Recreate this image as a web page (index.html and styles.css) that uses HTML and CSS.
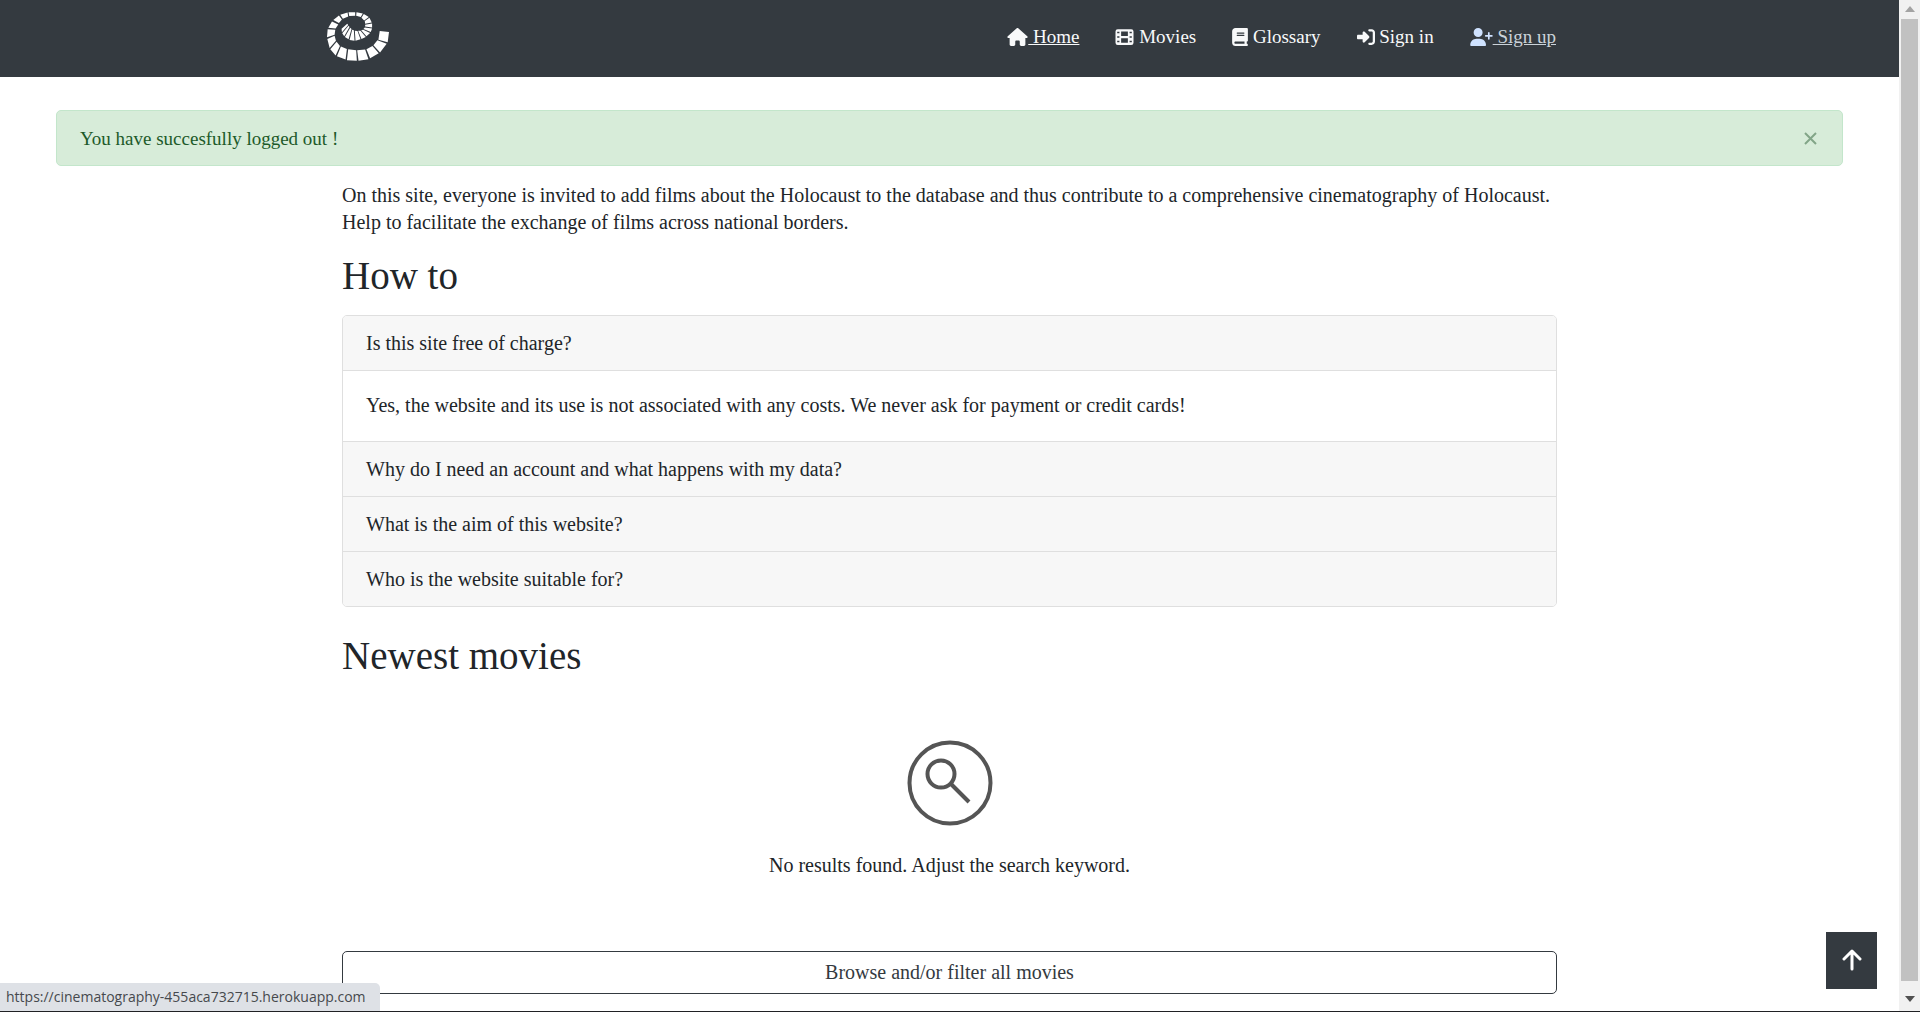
FILE: index.html
```html
<!DOCTYPE html>
<html lang="en">
<head>
<meta charset="utf-8">
<meta name="viewport" content="width=device-width, initial-scale=1">
<title>Cinematography of Holocaust</title>
<link rel="stylesheet" href="styles.css">
</head>
<body>
<div class="page">
  <header class="site-header">
    <div class="header-inner">
      <a class="logo" href="#" aria-label="Cinematography home">
        <svg viewBox="45 35 193 153" width="64" height="51" fill="#fff" aria-hidden="true">
          <path d="M207 95L235 98L231 129L203 121ZM200 123L228 133L208 160L188 138ZM185 140L204 162L178 177L167 150ZM163 151L173 180L143 185L139 153ZM136 153L138 185L108 183L112 150ZM108 149L104 181L78 171L90 142ZM87 140L74 169L58 150L77 127ZM75 124L56 146L49 119L71 109ZM71 106L48 114L50 90L73 91ZM74 87L52 85L63 66L82 75ZM84 71L67 62L84 48L93 60ZM96 58L88 46L110 39L112 51ZM115 50L113 38L133 38L133 49ZM136 49L137 38L156 42L150 53ZM152 55L159 44L174 53L160 63ZM162 65L176 55L183 69L163 73ZM163 76L184 72L184 84L163 81ZM162 84L184 87L180 98L158 89ZM157 91L178 101L167 111L151 93ZM149 94L165 113L152 119L142 94ZM140 95L149 120L134 124L132 94ZM129 93L131 124L116 122L124 91ZM122 89L113 120L102 113L118 85ZM116 83L100 111L94 102L113 79ZM112 77L93 99L92 88L109 73Z"/>
        </svg>
      </a>
      <nav class="nav" aria-label="Main">
        <a class="nav-link underlined" href="#">
          <svg class="icon" width="21" height="18" viewBox="0 0 576 512" aria-hidden="true"><path d="M575.8 255.5c0 18-15 32.1-32 32.1h-32l.7 160.2c0 2.7-.2 5.4-.5 8.1V472c0 22.1-17.9 40-40 40H456c-1.100 0-2.200 0-3.300-.1c-1.400 .1-2.800 .1-4.200 .1H416 392c-22.100 0-40-17.900-40-40V448 384c0-17.700-14.300-32-32-32H256c-17.700 0-32 14.300-32 32v64 24c0 22.100-17.900 40-40 40H160 128.100c-1.500 0-3-.1-4.500-.2c-1.200 .1-2.400 .2-3.600 .2H104c-22.100 0-40-17.900-40-40V360c0-.9 0-1.900 .1-2.800V287.600H32c-18 0-32-14-32-32.100c0-9 3-17 10-24L266.400 8c7-7 15-8 22-8s15 2 21 7L564.800 231.500c8 7 12 15 11 24z"/></svg><span class="nav-text">&nbsp;Home</span></a>
        <a class="nav-link" href="#">
          <svg class="icon" width="19" height="18" viewBox="0 0 512 512" aria-hidden="true"><path fill-rule="evenodd" d="M64 32H448a64 64 0 0 1 64 64V416a64 64 0 0 1-64 64H64a64 64 0 0 1-64-64V96a64 64 0 0 1 64-64ZM48 104v48h64v-48ZM48 232v48h64v-48ZM48 360v48h64v-48ZM400 104v48h64v-48ZM400 232v48h64v-48ZM400 360v48h64v-48ZM160 96v128h192V96ZM160 288v128h192V288Z"/></svg><span class="nav-text">&nbsp;Movies</span></a>
        <a class="nav-link" href="#">
          <svg class="icon" width="16" height="18" viewBox="0 0 448 512" aria-hidden="true"><path d="M96 0C43 0 0 43 0 96V416c0 53 43 96 96 96H384h32c17.700 0 32-14.300 32-32s-14.300-32-32-32V384c17.700 0 32-14.300 32-32V32c0-17.700-14.300-32-32-32H384 96zm0 384H352v64H96c-17.700 0-32-14.300-32-32s14.300-32 32-32zm32-240c0-8.800 7.200-16 16-16H336c8.800 0 16 7.200 16 16s-7.200 16-16 16H144c-8.800 0-16-7.200-16-16zm16 48H336c8.800 0 16 7.200 16 16s-7.200 16-16 16H144c-8.800 0-16-7.200-16-16s7.200-16 16-16z"/></svg><span class="nav-text">&nbsp;Glossary</span></a>
        <a class="nav-link" href="#">
          <svg class="icon" width="18" height="18" viewBox="0 0 512 512" aria-hidden="true"><path d="M217.900 105.900L340.700 228.700c7.200 7.200 11.300 17.100 11.300 27.300s-4.100 20.100-11.300 27.300L217.900 406.100c-6.400 6.400-15 9.900-24 9.900c-18.700 0-33.900-15.200-33.900-33.900V320H32c-17.700 0-32-14.300-32-32V224c0-17.700 14.300-32 32-32H160V129.900c0-18.700 15.200-33.900 33.900-33.900c9 0 17.600 3.600 24 9.900zM352 416h64c17.700 0 32-14.300 32-32V128c0-17.700-14.300-32-32-32H352c-17.700 0-32-14.300-32-32s14.300-32 32-32h64c53 0 96 43 96 96V384c0 53-43 96-96 96H352c-17.700 0-32-14.300-32-32s14.300-32 32-32z"/></svg><span class="nav-text">&nbsp;Sign in</span></a>
        <a class="nav-link underlined hovered" href="#">
          <svg class="icon" width="23" height="18" viewBox="0 0 640 512" aria-hidden="true"><path d="M96 128a128 128 0 1 1 256 0A128 128 0 1 1 96 128zM0 482.300C0 383.800 79.800 304 178.300 304h91.400C368.200 304 448 383.800 448 482.300c0 16.400-13.300 29.700-29.700 29.700H29.700C13.300 512 0 498.700 0 482.300zM504 312V248H440c-13.300 0-24-10.700-24-24s10.700-24 24-24h64V136c0-13.300 10.700-24 24-24s24 10.700 24 24v64h64c13.300 0 24 10.700 24 24s-10.700 24-24 24H552v64c0 13.300-10.700 24-24 24s-24-10.700-24-24z"/></svg><span class="nav-text">&nbsp;Sign up</span></a>
      </nav>
    </div>
  </header>

  <div class="alert" role="alert">
    <span>You have succesfully logged out !</span>
    <button class="alert-close" type="button" aria-label="Close">
      <svg width="13" height="13" viewBox="0 0 13 13" fill="none" stroke="currentColor" stroke-width="2" aria-hidden="true"><path d="M1 1L12 12M12 1L1 12"/></svg>
    </button>
  </div>

  <main class="container">
    <p class="intro">On this site, everyone is invited to add films about the Holocaust to the database and thus contribute to a comprehensive cinematography of Holocaust.<br>Help to facilitate the exchange of films across national borders.</p>

    <h2 class="title">How to</h2>
    <div class="accordion">
      <button class="question" type="button" aria-expanded="true" aria-controls="answer-cost">Is this site free of charge?</button>
      <div class="answer" id="answer-cost">Yes, the website and its use is not associated with any costs. We never ask for payment or credit cards!</div>
      <button class="question" type="button" aria-expanded="false">Why do I need an account and what happens with my data?</button>
      <button class="question" type="button" aria-expanded="false">What is the aim of this website?</button>
      <button class="question" type="button" aria-expanded="false">Who is the website suitable for?</button>
    </div>

    <h2 class="title">Newest movies</h2>
    <section class="empty">
      <svg width="86" height="86" viewBox="0 0 86 86" fill="none" stroke="#555" stroke-width="4" aria-hidden="true">
        <circle cx="43" cy="43" r="40.500"/><circle cx="34" cy="34" r="13.500"/><path d="M44 44L62 62"/>
      </svg>
      <p class="empty-text">No results found. Adjust the search keyword.</p>
    </section>
    <a class="browse" href="#">Browse and/or filter all movies</a>
  </main>
</div>

<button class="to-top" type="button" aria-label="Back to top">
  <svg width="20" height="22" viewBox="0 0 20 22" fill="none" stroke="#fff" stroke-width="3" stroke-linecap="round" stroke-linejoin="round" aria-hidden="true"><path d="M10 20V3M2 10L10 2L18 10"/></svg>
</button>
<div class="status">https://cinematography-455aca732715.herokuapp.com</div>
<div class="scrollbar" aria-hidden="true">
  <svg width="10" height="6" viewBox="0 0 10 6"><path fill="#a3a3a3" d="M0 6L5 0L10 6Z"/></svg>
  <div class="thumb"></div>
  <svg width="10" height="6" viewBox="0 0 10 6"><path fill="#505050" d="M0 0H10L5 6Z"/></svg>
</div>
<div class="window-edge"></div>
</body>
</html>
```
FILE: styles.css
```css
* {
  box-sizing: border-box;
}

html {
  overflow: hidden;
}

body {
  margin: 0;
  background: #fff;
  color: #212529;
  font: 20px/27px Georgia, "Liberation Serif", serif;
}

button {
  font: inherit;
  color: inherit;
  cursor: pointer;
}

.page {
  margin-right: 21px;
}

.site-header {
  background: #343a40;
  padding: 0 24px;
}

.header-inner {
  display: flex;
  align-items: center;
  justify-content: space-between;
  max-width: 1247px;
  min-height: 77px;
  margin: 0 auto;
  padding-right: 17px;
}

.logo {
  display: flex;
  padding-bottom: 4px;
}

.nav {
  display: flex;
  gap: 36px;
  padding-bottom: 4px;
  font-size: 19px;
}

.nav-link {
  display: flex;
  align-items: center;
  color: #f8f9fa;
  text-decoration: none;
}

.underlined .nav-text {
  text-decoration: underline;
}

.hovered {
  color: #cbd3da;
}

.icon {
  fill: currentColor;
}

.hovered .icon {
  fill: #cfe2ff;
}

.alert {
  display: flex;
  align-items: center;
  justify-content: space-between;
  min-height: 56px;
  margin: 33px 56px 16px;
  padding: 0 25px 0 23px;
  border: 1px solid #c3e6cb;
  border-radius: 5px;
  background: #d7ecd9;
  color: #1d5a2a;
  font-size: 19px;
}

.alert-close {
  display: flex;
  padding: 0;
  border: 0;
  background: none;
  color: #82a588;
}

.container {
  max-width: 1215px;
  margin: 0 auto;
}

.intro {
  margin: 0 0 18px;
}

.title {
  margin: 0 0 18px;
  font-size: 39px;
  line-height: 43px;
  font-weight: 400;
}

.accordion {
  display: flex;
  flex-direction: column;
  margin-bottom: 27px;
  border: 1px solid #dfdfdf;
  border-radius: 5px;
  overflow: hidden;
}

.question {
  padding: 14px 23px 13px;
  border: 0;
  background: #f7f7f7;
  text-align: left;
}

.question + *,
.answer + .question {
  border-top: 1px solid #dfdfdf;
}

.answer {
  padding: 21px 23px 22px;
}

.empty {
  display: flex;
  flex-direction: column;
  align-items: center;
  gap: 26px;
  padding: 45px 0 72px;
}

.empty-text {
  margin: 0;
}

.browse {
  display: block;
  padding: 7px;
  border: 1px solid #343a40;
  border-radius: 5px;
  color: #343a40;
  text-align: center;
  text-decoration: none;
}

.to-top {
  position: fixed;
  right: 43px;
  bottom: 23px;
  display: flex;
  align-items: center;
  justify-content: center;
  width: 51px;
  height: 57px;
  padding: 0 0 2px;
  border: 0;
  background: #343a40;
}

.status {
  position: fixed;
  left: 0;
  bottom: 1px;
  padding: 0 14px 0 6px;
  border-radius: 0 5px 0 0;
  background: #dee1e6;
  color: #46494d;
  font: 14px/28px "Segoe UI", "Open Sans", sans-serif;
}

.scrollbar {
  position: fixed;
  top: 0;
  right: 0;
  bottom: 0;
  display: flex;
  flex-direction: column;
  align-items: center;
  gap: 7px;
  width: 21px;
  padding: 6px 0 10px;
  background: #f1f1f1;
}

.thumb {
  flex: 1;
  width: 17px;
  margin-bottom: 8px;
  background: #c1c1c1;
}

.window-edge {
  position: fixed;
  right: 0;
  bottom: 0;
  left: 0;
  height: 1px;
  background: #202124;
}
```
